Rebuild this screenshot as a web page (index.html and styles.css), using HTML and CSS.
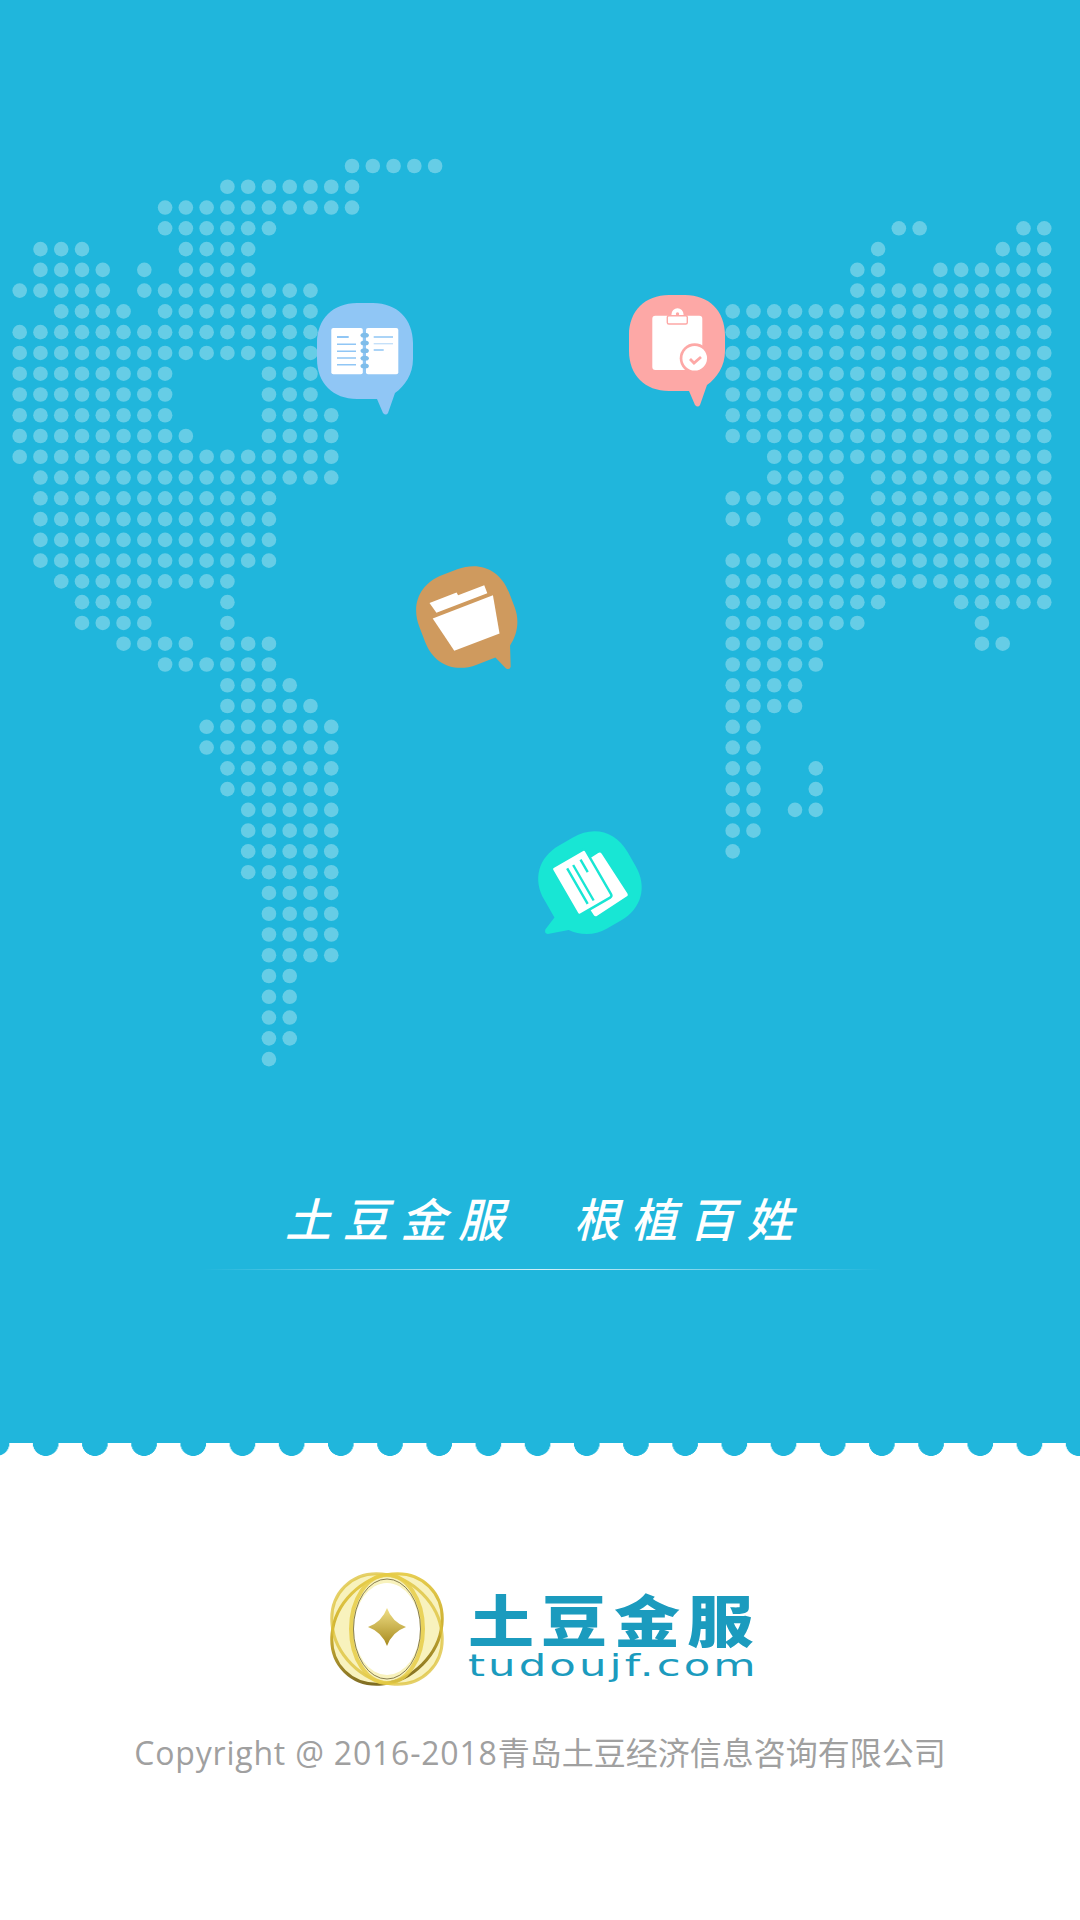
FILE: index.html
```html
<!DOCTYPE html>
<html lang="zh-CN">

<head>
    <meta charset="UTF-8">
    <meta name="viewport" content="width=device-width, initial-scale=1.0">
    <title>土豆金服</title>
    <link rel="stylesheet" href="styles.css">
</head>

<body>
    <div class="hero">
        <div class="map">
            <svg class="dots" id="dots" width="1080" height="1080"></svg>

            <!-- shared bubble shape -->
            <svg class="defs" width="0" height="0">
                <defs>
                    <path id="bubble" d="M40 0H56C80 0 96 16 96 40V56C96 71 88 83 78 90L71 110Q69 113 66 110L60 96H40C16 96 0 80 0 56V40C0 16 16 0 40 0Z" />
                </defs>
            </svg>

            <svg class="pin pin-book" viewBox="0 0 96 112">
                <use href="#bubble" fill="#90c6f5" />
                <rect x="14.3" y="25" width="31.5" height="46.3" rx="2" fill="#fff" />
                <rect x="49" y="25" width="32.3" height="46.3" rx="2" fill="#fff" />
                <g fill="#7fbdea">
                    <ellipse cx="47.7" cy="32.3" rx="4.2" ry="2.5" />
                    <ellipse cx="47.7" cy="40" rx="4.2" ry="2.5" />
                    <ellipse cx="47.7" cy="47.7" rx="4.2" ry="2.5" />
                    <ellipse cx="47.7" cy="55.3" rx="4.2" ry="2.5" />
                    <ellipse cx="47.7" cy="63" rx="4.2" ry="2.5" />
                </g>
                <g stroke="#90c6f5" stroke-width="1.4">
                    <path d="M20 34H31.7" stroke-width="2" />
                    <path d="M20 41.3H39M20 48.3H39M20 55H39M20 61.7H39" />
                    <path d="M56.7 34H76M56.7 47H66.7" />
                    <path d="M56.7 40.7H76" stroke="#c5e0f9" />
                </g>
            </svg>

            <svg class="pin pin-clip" viewBox="0 0 96 112">
                <use href="#bubble" fill="#fda8a6" />
                <rect x="23.3" y="20.7" width="50" height="54.3" rx="3" fill="#fff" />
                <circle cx="48.5" cy="19.3" r="6" fill="#fff" />
                <rect x="38.3" y="20.7" width="20" height="8.3" rx="1.5" fill="#fff" stroke="#fda8a6" stroke-width="1.4" />
                <circle cx="48.5" cy="19" r="1.7" fill="#fda8a6" />
                <circle cx="65.7" cy="63.3" r="15" fill="#fda8a6" />
                <circle cx="65.7" cy="63.3" r="12.3" fill="#fff" />
                <path d="M61 64L65 68L72 62" fill="none" stroke="#fda8a6" stroke-width="2.8" />
            </svg>

            <svg class="pin pin-folder" viewBox="0 0 96 112">
                <use href="#bubble" fill="#cf9a5e" />
                <path d="M18 21.5H47L47.5 24.5H75.5V33H21Z" fill="#fff" />
                <path d="M15.5 37H80L72.5 75H24Z" fill="#fff" />
            </svg>

            <svg class="pin pin-card" viewBox="0 0 96 112">
                <use href="#bubble" fill="#18e6d4" />
                <rect x="27" y="22" width="52" height="40" rx="2.5" fill="#fff" transform="rotate(-3 53 42)" />
                <rect x="15.7" y="35.4" width="55" height="39" rx="2.5" fill="#fff" stroke="#18e6d4" stroke-width="2.4" />
                <g stroke="#18e6d4" stroke-width="2.4">
                    <path d="M24 60.5H65M24 53.6H65M23 44.5H37.4" />
                </g>
            </svg>
        </div>

        <div class="slogan">土豆金服　根植百姓</div>
        <div class="slogan-line"></div>
    </div>
    <div class="scallop"></div>

    <div class="footer">
        <div class="logo">
            <svg class="logo-ring" viewBox="0 0 114 114" width="114" height="114">
                <defs>
                    <linearGradient id="gold" x1="0" y1="0" x2="1" y2="1">
                        <stop offset="0" stop-color="#f0d64e" />
                        <stop offset="0.5" stop-color="#c9a920" />
                        <stop offset="1" stop-color="#4d3d06" />
                    </linearGradient>
                    <linearGradient id="star" x1="0" y1="0" x2="0" y2="1">
                        <stop offset="0" stop-color="#f0df86" />
                        <stop offset="1" stop-color="#a6891e" />
                    </linearGradient>
                </defs>
                <g transform="translate(57 57)">
                    <ellipse rx="50" ry="60" fill="#f8f2bd" transform="rotate(45)" />
                    <ellipse rx="50" ry="60" fill="#f8f2bd" transform="rotate(-45)" />
                    <ellipse rx="33" ry="46" fill="#fff" />
                    <ellipse rx="50" ry="60" fill="none" stroke="url(#gold)" stroke-width="3" opacity="0.9" transform="rotate(45)" />
                    <ellipse rx="50" ry="60" fill="none" stroke="#dcc038" stroke-width="3" opacity="0.75" transform="rotate(-45)" />
                    <ellipse rx="36" ry="54" fill="none" stroke="#e6cc48" stroke-width="4" opacity="0.85" />
                    <ellipse rx="33.5" ry="50" fill="none" stroke="#3a2f08" stroke-width="1" opacity="0.6" />
                    <path d="M0 -19Q5 -5 19 0Q5 5 0 19Q-5 5 -19 0Q-5 -5 0 -19Z" fill="url(#star)" transform="translate(0 -2)" />
                </g>
            </svg>
            <div class="logo-text">
                <div class="logo-cn">土豆金服</div>
                <div class="logo-en">tudoujf.com</div>
            </div>
        </div>
        <p class="copyright"><span class="copyright-en">Copyright @ 2016-2018</span>青岛土豆经济信息咨询有限公司</p>
    </div>

    <script src="script.js"></script>
</body>

</html>
```

FILE: styles.css
```css
* {
    margin: 0;
    padding: 0;
    box-sizing: border-box;
}

body {
    width: 1080px;
    height: 1920px;
    background-color: #fff;
    font-family: "Noto Sans CJK SC", sans-serif;
    overflow: hidden;
}

.hero {
    height: 1443px;
    background-color: #20b6dc;
}

.map {
    position: relative;
    height: 1188px;
}

.dots {
    position: absolute;
    top: 0;
    left: 0;
}

.dots circle {
    fill: #66cde6;
}

.defs {
    position: absolute;
}

.pin {
    position: absolute;
    width: 96px;
    height: 112px;
    overflow: visible;
    transform-origin: 48px 48px;
}

.pin-book {
    top: 303px;
    left: 317px;
}

.pin-clip {
    top: 295px;
    left: 629px;
}

.pin-folder {
    top: 569px;
    left: 419px;
    transform: rotate(-21deg);
}

.pin-card {
    top: 835px;
    left: 542px;
    transform: rotate(60deg);
}

.slogan {
    padding-left: 285px;
    font-size: 46px;
    line-height: 58px;
    font-style: italic;
    font-weight: 500;
    letter-spacing: 11.7px;
    color: #fff;
    white-space: nowrap;
}

.slogan-line {
    width: 680px;
    height: 1px;
    margin: 23px 0 0 202px;
    background: linear-gradient(90deg, rgba(255, 255, 255, 0), rgba(255, 255, 255, 0.8) 50%, rgba(255, 255, 255, 0));
}

.scallop {
    height: 13px;
    background-image: radial-gradient(circle at 50% 0, #20b6dc 12.6px, rgba(32, 182, 220, 0) 13.2px);
    background-size: 49.2px 13px;
    background-position: 21.1px 0;
    background-repeat: repeat-x;
}

.footer {
    display: flex;
    flex-direction: column;
    align-items: center;
    padding-top: 116px;
}

.logo {
    display: flex;
    align-items: flex-start;
    gap: 24px;
    margin-left: 3px;
}

.logo-ring {
    display: block;
}

.logo-text {
    width: 285px;
    padding-top: 18px;
}

.logo-cn {
    font-size: 56px;
    line-height: 56px;
    font-weight: 900;
    letter-spacing: 5.9px;
    color: #1b9bbe;
    white-space: nowrap;
    transform: scaleX(1.18);
    transform-origin: left center;
}

.logo-en {
    margin-top: 2px;
    font-family: "DejaVu Sans", sans-serif;
    font-size: 31px;
    line-height: 34px;
    letter-spacing: 2.2px;
    color: #1b9bbe;
    white-space: nowrap;
    transform: scaleX(1.4);
    transform-origin: left center;
}

.copyright {
    margin-top: 45px;
    font-family: "Open Sans", "Noto Sans CJK SC", sans-serif;
    font-size: 32px;
    line-height: 44px;
    color: #a0a0a0;
    white-space: nowrap;
}

.copyright-en {
    letter-spacing: 0.8px;
}
```

FILE: script.js
```js
// dot map: each row lists the filled columns, "a-b" is a run
var pitch = 20.77
var top0 = 166

var west = {
    x0: 19.7,
    rows: [
        '16-20', '10-16', '7-16', '7-12', '1-3 8-11', '1-4 6 8-11', '0-4 6-14', '2-5 7-14',
        '0-14', '0-14', '0-7 12-14', '0-7 12-14', '0-7 12-15', '0-8 12-15', '0-15', '1-15',
        '1-12', '1-12', '1-12', '1-12', '2-10', '3-6 10', '3-6 10', '5-8 10-12', '7-12',
        '10-13', '10-14', '9-15', '9-15', '10-15', '10-15',
        '11-15', '11-15', '11-15', '11-15', '12-15', '12-15', '12-15', '12-15',
        '12-13', '12-13', '12-13', '12-13', '12'
    ]
}

var east = {
    x0: 732.7,
    rows: [
        '', '', '', '8-9 14-15', '7 13-15', '6-7 10-15', '6-15',
        '0-15', '0-15', '0-15', '0-15', '0-15', '0-15', '0-15',
        '2-15', '2-5 7-15', '0-5 7-15', '0-1 3-5 7-15', '3-15', '0-15', '0-15',
        '0-7 11-15', '0-6 12', '0-4 12-13', '0-4', '0-3', '0-3', '0-1', '0-1',
        '0-1 4', '0-1 4', '0-1 3-4', '0-1', '0'
    ]
}

var svg = document.getElementById('dots')

function drawDots(part) {
    part.rows.forEach(function (row, r) {
        if (!row) {
            return
        }
        row.split(' ').forEach(function (run) {
            var ends = run.split('-').map(Number)
            var last = ends.length > 1 ? ends[1] : ends[0]
            for (var c = ends[0]; c <= last; c++) {
                var dot = document.createElementNS('http://www.w3.org/2000/svg', 'circle')
                dot.setAttribute('cx', part.x0 + c * pitch)
                dot.setAttribute('cy', top0 + r * pitch)
                dot.setAttribute('r', 7.3)
                svg.appendChild(dot)
            }
        })
    })
}

drawDots(west)
drawDots(east)
```
